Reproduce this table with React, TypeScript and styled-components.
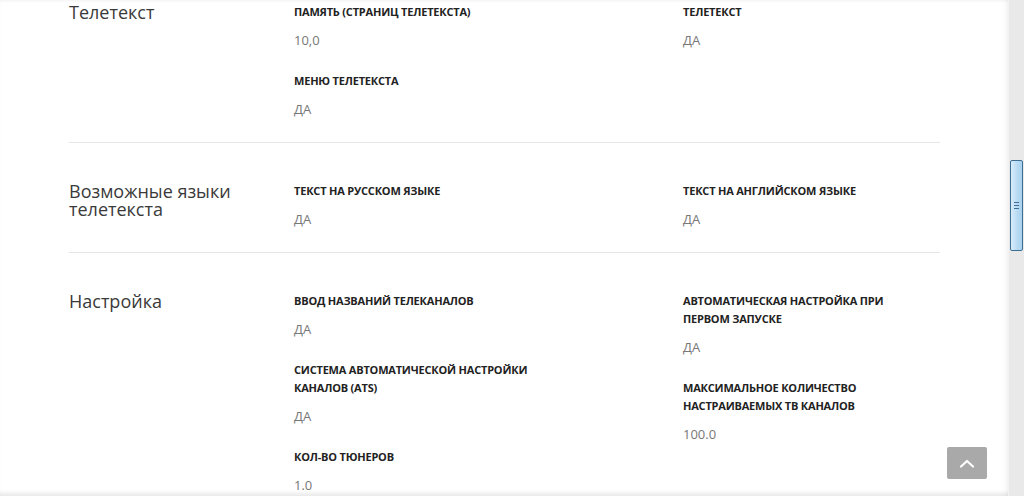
import React from "react";
import styled, { createGlobalStyle } from "styled-components";

const GlobalStyle = createGlobalStyle`
  html, body {
    margin: 0;
    padding: 0;
    background: #ffffff;
    overflow: hidden;
  }
  body {
    font-family: "Open Sans", "Liberation Sans", sans-serif;
  }
`;

const Window = styled.div`
  display: flex;
  width: 1024px;
  height: 496px;
  overflow: hidden;
`;
const Viewport = styled.div`
  position: relative;
  flex: 1;
  height: 496px;
  overflow: hidden;
  background: #ffffff;
  box-shadow: inset 0 3px 3px -2px rgba(0, 0, 0, 0.06),
    inset 0 -5px 4px -2px rgba(0, 0, 0, 0.09),
    inset -6px 0 5px -4px rgba(0, 0, 0, 0.05);
`;
const Specs = styled.div`
  margin: 0 68px 0 69px;
`;
const Section = styled.section<{ $first?: boolean; $last?: boolean }>`
  display: grid;
  grid-template-columns: 225px 389px 1fr;
  padding: ${(p) => (p.$first ? "3px" : "39px")} 0 24px;
  border-bottom: ${(p) => (p.$last ? "none" : "1px solid #e6e6e6")};
`;
const Heading = styled.h3`
  margin: 0;
  font-size: 18px;
  line-height: 18px;
  font-weight: 400;
  color: #3a3a3a;
  padding-right: 20px;
`;
const Column = styled.div<{ $width: number }>`
  display: flex;
  flex-direction: column;
  gap: 23px;
  max-width: ${(p) => p.$width}px;
`;
const Item = styled.div`
  display: flex;
  flex-direction: column;
`;
const Label = styled.div`
  font-size: 11px;
  line-height: 18px;
  font-weight: 700;
  text-transform: uppercase;
  color: #222222;
  letter-spacing: -0.2px;
`;
const Value = styled.div`
  margin-top: 10px;
  font-size: 13px;
  line-height: 18px;
  color: #777777;
`;
const BackToTop = styled.button`
  position: absolute;
  left: 947px;
  top: 447px;
  width: 40px;
  height: 32px;
  border: none;
  border-radius: 2px;
  background: #a9a9a9;
  display: flex;
  align-items: center;
  justify-content: center;
  padding: 0;
  cursor: pointer;
`;
const Track = styled.div`
  width: 16px;
  height: 496px;
  background: #e9e9e9;
  border-left: 1px solid #f2f2f2;
  box-sizing: border-box;
`;
const Thumb = styled.div`
  margin: 160px 1px 0 1px;
  height: 91px;
  box-sizing: border-box;
  border: 1px solid #3d6f94;
  border-radius: 2px;
  background: linear-gradient(to right, #d8ecfa, #b7daf3 60%, #a9d1ee);
  display: flex;
  align-items: center;
  justify-content: center;
`;
const Grip = styled.div`
  width: 5px;
  height: 7px;
  background: repeating-linear-gradient(
    to bottom,
    #3f6f96 0,
    #3f6f96 1px,
    transparent 1px,
    transparent 3px
  );
`;

type Spec = { label: string; value: string };
type Group = { title: React.ReactNode; left: Spec[]; right: Spec[] };

const groups: Group[] = [
  {
    title: "Телетекст",
    left: [
      { label: "Память (страниц телетекста)", value: "10,0" },
      { label: "Меню телетекста", value: "ДА" },
    ],
    right: [{ label: "Телетекст", value: "ДА" }],
  },
  {
    title: (
      <>
        Возможные языки
        <br />
        телетекста
      </>
    ),
    left: [{ label: "Текст на русском языке", value: "ДА" }],
    right: [{ label: "Текст на английском языке", value: "ДА" }],
  },
  {
    title: "Настройка",
    left: [
      { label: "Ввод названий телеканалов", value: "ДА" },
      { label: "Система автоматической настройки каналов (ATS)", value: "ДА" },
      { label: "Кол-во тюнеров", value: "1.0" },
    ],
    right: [
      { label: "Автоматическая настройка при первом запуске", value: "ДА" },
      { label: "Максимальное количество настраиваемых ТВ каналов", value: "100.0" },
    ],
  },
];

function SpecColumn({ items, width }: { items: Spec[]; width: number }) {
  return (
    <Column $width={width}>
      {items.map((it) => (
        <Item key={it.label}>
          <Label>{it.label}</Label>
          <Value>{it.value}</Value>
        </Item>
      ))}
    </Column>
  );
}

export default function App() {
  return (
    <>
      <GlobalStyle />
      <Window>
        <Viewport>
          <Specs>
            {groups.map((g, i) => (
              <Section key={i} $first={i === 0} $last={i === groups.length - 1}>
                <Heading>{g.title}</Heading>
                <SpecColumn items={g.left} width={250} />
                <SpecColumn items={g.right} width={215} />
              </Section>
            ))}
          </Specs>
          <BackToTop aria-label="Наверх">
            <svg width="16" height="9" viewBox="0 0 16 9">
              <path d="M2 7.5 L8 2 L14 7.5" fill="none" stroke="#ffffff" strokeWidth="2.2" strokeLinecap="round" strokeLinejoin="round" />
            </svg>
          </BackToTop>
        </Viewport>
        <Track>
          <Thumb>
            <Grip />
          </Thumb>
        </Track>
      </Window>
    </>
  );
}
